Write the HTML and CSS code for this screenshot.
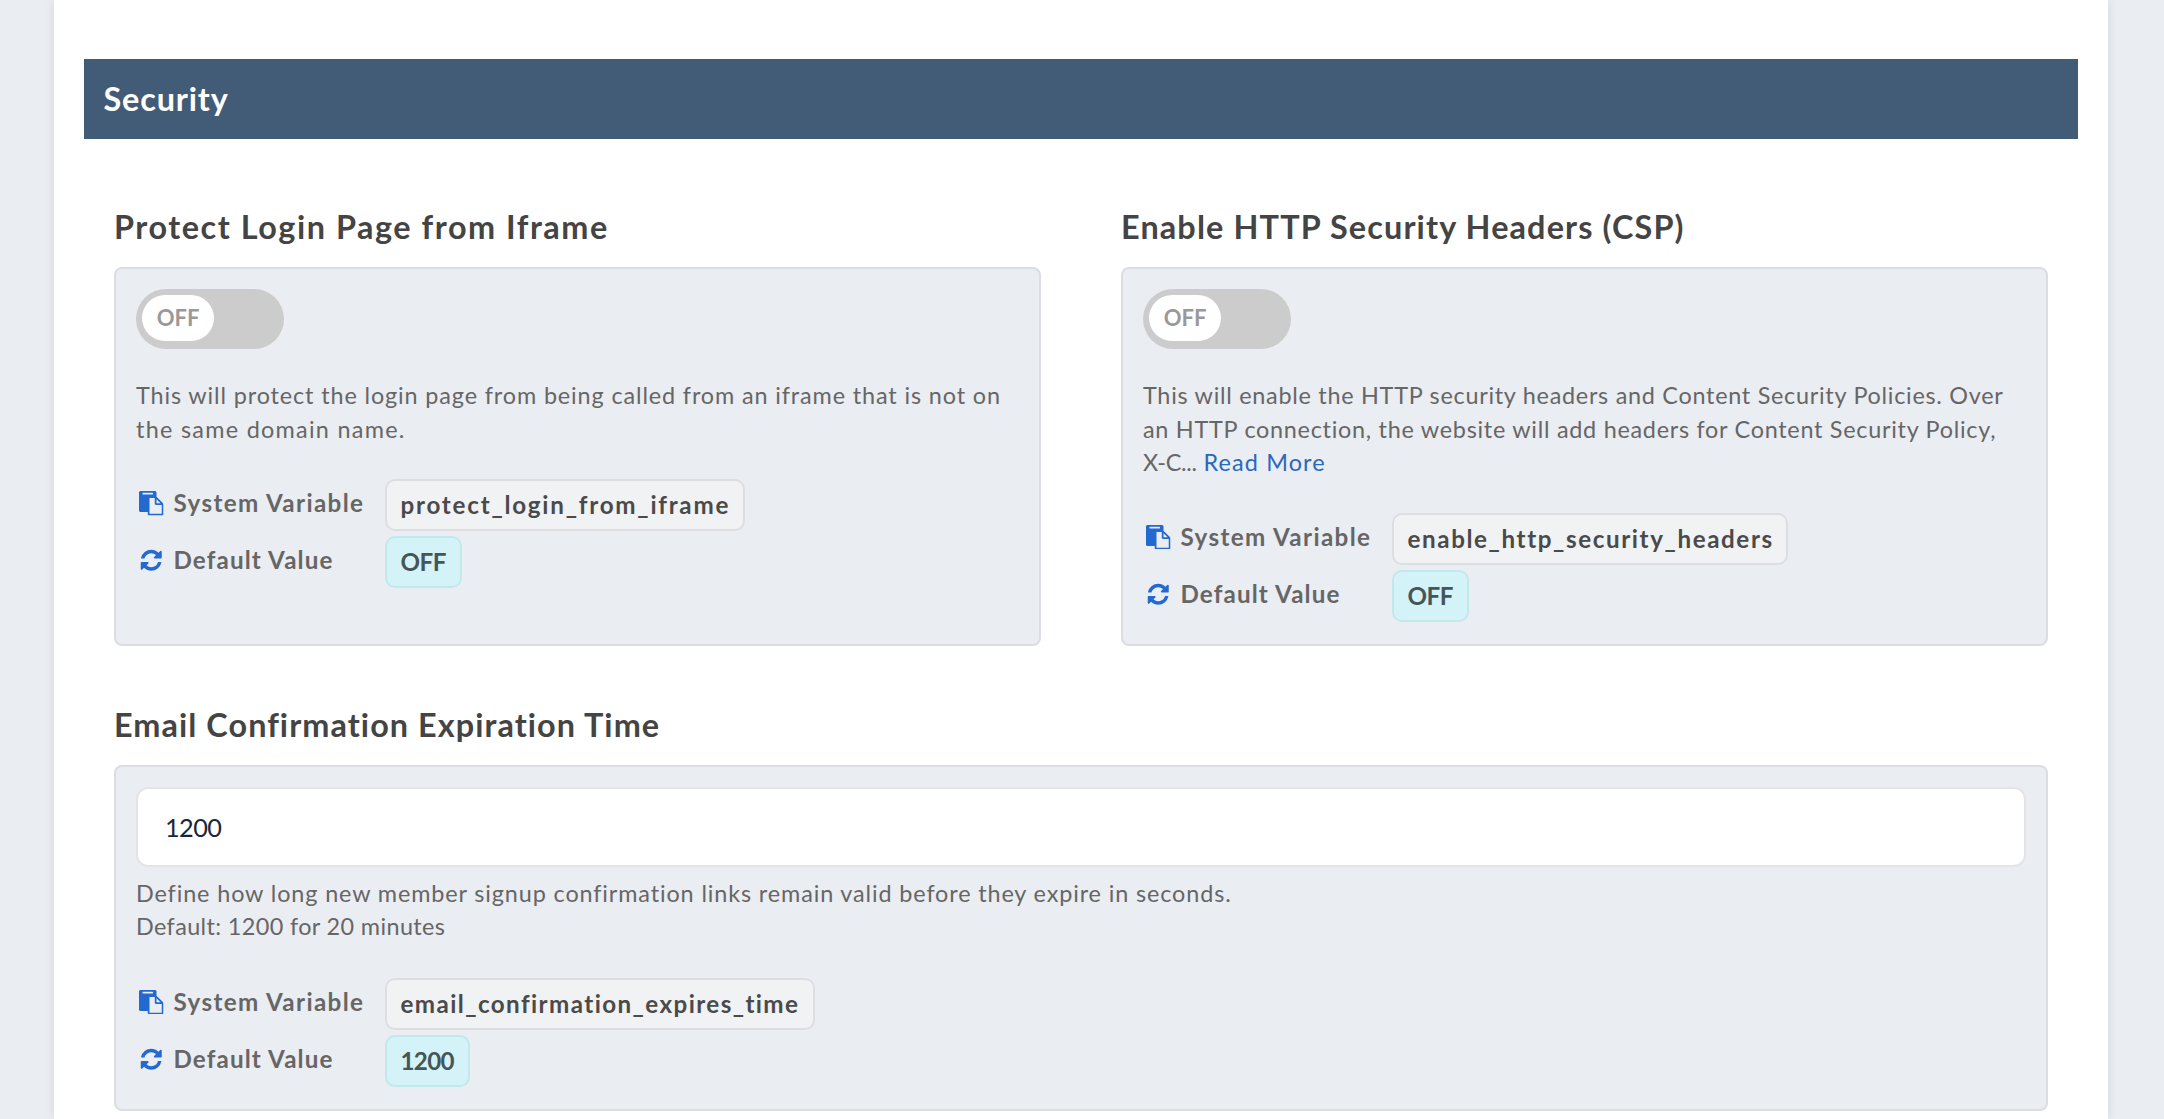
FILE: index.html
```html
<!DOCTYPE html>
<html lang="en">
<head>
<meta charset="utf-8">
<title>Security</title>
<link rel="stylesheet" href="styles.css">
</head>
<body>
<svg width="0" height="0" class="sprite" aria-hidden="true">
  <symbol id="paste" viewBox="0 0 1792 1792"><path d="M768 1664h896v-640h-416q-40 0-68-28t-28-68v-416h-384v1152zm256-1440v-64q0-13-9.5-22.5t-22.5-9.5h-704q-13 0-22.5 9.5t-9.5 22.5v64q0 13 9.5 22.5t22.5 9.5h704q13 0 22.5-9.5t9.5-22.5zm256 672h299l-299-299v299zm512 128v672q0 40-28 68t-68 28h-960q-40 0-68-28t-28-68v-160h-544q-40 0-68-28t-28-68v-1344q0-40 28-68t68-28h1088q40 0 68 28t28 68v328q21 13 36 28l408 408q28 28 48 76t20 88z"/></symbol>
  <symbol id="refresh" viewBox="0 0 1792 1792"><path d="M1639 1056q0 5-1 7-64 268-268 434.5t-478 166.5q-146 0-282.5-55t-243.5-157l-129 129q-19 19-45 19t-45-19-19-45v-448q0-26 19-45t45-19h448q26 0 45 19t19 45-19 45l-137 137q71 66 161 102t187 36q134 0 250-65t186-179q11-17 53-117 8-23 30-23h192q13 0 22.5 9.5t9.5 22.5zm25-800v448q0 26-19 45t-45 19h-448q-26 0-45-19t-19-45 19-45l138-138q-148-137-349-137-134 0-250 65t-186 179q-11 17-53 117-8 23-30 23h-199q-13 0-22.5-9.5t-9.5-22.5v-7q65-268 270-434.5t480-166.5q146 0 284 55.5t245 156.5l130-129q19-19 45-19t45 19 19 45z"/></symbol>
</svg>
<main class="panel">
  <h1 class="section-title">Security</h1>
  <div class="settings">
    <section class="setting setting-iframe">
      <h2 class="setting-title">Protect Login Page from Iframe</h2>
      <div class="card">
        <div class="toggle"><span class="knob">OFF</span></div>
        <p class="description">This will protect the login page from being called from an iframe that is not on<br><span class="line-last">the same domain name.</span></p>
        <dl class="meta">
          <dt><svg class="icon"><use href="#paste"/></svg>System Variable</dt>
          <dd><code class="chip chip-name">protect_login_from_iframe</code></dd>
          <dt class="default-label"><svg class="icon"><use href="#refresh"/></svg>Default Value</dt>
          <dd><code class="chip chip-default">OFF</code></dd>
        </dl>
      </div>
    </section>
    <section class="setting setting-headers">
      <h2 class="setting-title">Enable HTTP Security Headers (CSP)</h2>
      <div class="card">
        <div class="toggle"><span class="knob">OFF</span></div>
        <p class="description">This will enable the HTTP security headers and Content Security Policies. Over<br>an HTTP connection, the website will add headers for Content Security Policy,<br><span class="line-last">X-C...</span> <a class="more" href="#">Read More</a></p>
        <dl class="meta">
          <dt><svg class="icon"><use href="#paste"/></svg>System Variable</dt>
          <dd><code class="chip chip-name">enable_http_security_headers</code></dd>
          <dt class="default-label"><svg class="icon"><use href="#refresh"/></svg>Default Value</dt>
          <dd><code class="chip chip-default">OFF</code></dd>
        </dl>
      </div>
    </section>
    <section class="setting setting-email">
      <h2 class="setting-title">Email Confirmation Expiration Time</h2>
      <div class="card">
        <input class="field" type="text" value="1200">
        <p class="description">Define how long new member signup confirmation links remain valid before they expire in seconds.<br><span class="line-last">Default: 1200 for 20 minutes</span></p>
        <dl class="meta">
          <dt><svg class="icon"><use href="#paste"/></svg>System Variable</dt>
          <dd><code class="chip chip-name">email_confirmation_expires_time</code></dd>
          <dt class="default-label"><svg class="icon"><use href="#refresh"/></svg>Default Value</dt>
          <dd><code class="chip chip-default">1200</code></dd>
        </dl>
      </div>
    </section>
  </div>
</main>
</body>
</html>
```
FILE: styles.css
```css
* { box-sizing: border-box; }

body {
  margin: 0;
  padding: 0 56px 0 54px;
  height: 1119px;
  overflow: hidden;
  background: #eaeef3;
  color: #666;
  font: 23.4px/33.6px Lato, sans-serif;
  font-variant-ligatures: none;
}

.sprite { position: absolute; }

.panel {
  height: 1119px;
  padding: 59px 30px 0;
  background: #fff;
  box-shadow: 0 0 10px rgba(0, 0, 0, .1);
}

.section-title {
  margin: 0;
  height: 80px;
  padding-left: 19.5px;
  background: #425c77;
  color: #fff;
  font-size: 32.4px;
  font-weight: 700;
  letter-spacing: .85px;
  line-height: 80px;
}

.settings {
  display: grid;
  grid-template-columns: 1fr 1fr;
  gap: 59px 80px;
  padding: 68px 30px 0;
}

.setting { display: flex; flex-direction: column; }
.setting-email { grid-column: 1 / -1; }

.setting-title {
  margin: 0 0 20px;
  color: #444;
  font-size: 32.4px;
  font-weight: 700;
  line-height: 40px;
}

.card {
  flex: 1;
  padding: 20px 20px 22px;
  border: 2px solid #dadde1;
  border-radius: 8px;
  background: #eaedf2;
}

.toggle {
  display: flex;
  width: 148px;
  height: 60px;
  padding: 6px;
  border-radius: 30px;
  background: #ccc;
}

.knob {
  width: 72px;
  height: 46px;
  border-radius: 23px;
  background: #fff;
  color: #999;
  font-size: 22px;
  font-weight: 700;
  line-height: 45px;
  text-align: center;
}

.description { margin: 30px 0 33px; white-space: nowrap; }

.more { color: #2a67be; letter-spacing: 1.15px; text-decoration: none; }

.meta {
  display: grid;
  grid-template-columns: 249px 1fr;
  row-gap: 5px;
  margin: 0;
  font-size: 24.2px;
  font-weight: 700;
  letter-spacing: 1.38px;
}

.meta dt { display: flex; height: 52px; padding: 7px 0 0 3px; white-space: nowrap; }
.meta dd { margin: 0; }
.meta .default-label { letter-spacing: 1.13px; }

.icon {
  width: 24.5px;
  height: 24.5px;
  margin: 5px 10px 0 0;
  fill: #2369d0;
}

.chip {
  display: inline-block;
  height: 52px;
  padding: 0 12.5px 0 13.5px;
  border: 2px solid #dcdee1;
  border-radius: 10px;
  background: #f1f2f4;
  color: #4a4a4a;
  font: inherit;
  line-height: 47px;
  vertical-align: top;
}

.chip-default {
  padding-right: 14px;
  border-color: #c2e8ee;
  background: #d3f3f8;
  color: #455558;
  letter-spacing: -.5px;
}

.field {
  display: block;
  width: 100%;
  height: 80px;
  padding: 0 27px;
  border: 2px solid #e3e4e6;
  border-radius: 12px;
  background: #fff;
  color: #1c2638;
  font: 25.3px Lato, sans-serif;
  letter-spacing: -.6px;
}

.field + .description { margin: 10px 0 34px; }

/* Tracking per setting */
.setting-iframe .setting-title { letter-spacing: 1.54px; }
.setting-iframe .description { letter-spacing: .88px; }
.setting-iframe .line-last { letter-spacing: 1.28px; }
.setting-iframe .chip-name { letter-spacing: 1.77px; }

.setting-headers .setting-title { letter-spacing: 1.13px; }
.setting-headers .description { letter-spacing: .73px; }
.setting-headers .line-last { letter-spacing: -.3px; }
.setting-headers .chip-name { letter-spacing: 1.6px; }

.setting-email .setting-title { letter-spacing: 1.06px; }
.setting-email .description { letter-spacing: .88px; }
.setting-email .line-last { letter-spacing: .38px; }
.setting-email .chip-name { padding-right: 13.5px; letter-spacing: 1.42px; }
.setting-email .chip-default { letter-spacing: -.7px; }
```
